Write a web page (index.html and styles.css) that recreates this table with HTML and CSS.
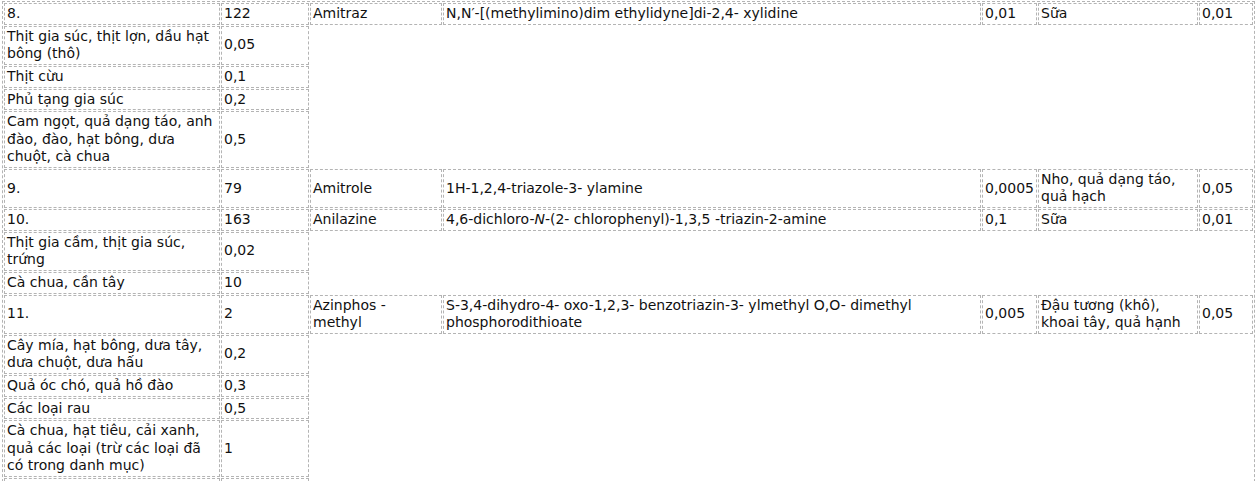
FILE: index.html
```html
<!DOCTYPE html>
<html lang="vi">
<head>
<meta charset="utf-8">
<title>Bảng giới hạn dư lượng</title>
<link rel="stylesheet" href="styles.css">
</head>
<body>
<table class="mrl">
  <tbody>
    <tr>
      <td class="c1">8.</td>
      <td class="c2">122</td>
      <td class="c3">Amitraz</td>
      <td class="c4">N,N′-[(methylimino)dim ethylidyne]di-2,4- xylidine</td>
      <td class="c5">0,01</td>
      <td class="c6">Sữa</td>
      <td class="c7">0,01</td>
    </tr>
    <tr><td>Thịt gia súc, thịt lợn, dầu hạt bông (thô)</td><td>0,05</td></tr>
    <tr><td>Thịt cừu</td><td>0,1</td></tr>
    <tr><td>Phủ tạng gia súc</td><td>0,2</td></tr>
    <tr><td>Cam ngọt, quả dạng táo, anh đào, đào, hạt bông, dưa chuột, cà chua</td><td>0,5</td></tr>
    <tr>
      <td>9.</td>
      <td>79</td>
      <td>Amitrole</td>
      <td>1H-1,2,4-triazole-3- ylamine</td>
      <td>0,0005</td>
      <td>Nho, quả dạng táo, quả hạch</td>
      <td>0,05</td>
    </tr>
    <tr>
      <td>10.</td>
      <td>163</td>
      <td>Anilazine</td>
      <td>4,6-dichloro-<i>N</i>-(2- chlorophenyl)-1,3,5 -triazin-2-amine</td>
      <td>0,1</td>
      <td>Sữa</td>
      <td>0,01</td>
    </tr>
    <tr><td>Thịt gia cầm, thịt gia súc, trứng</td><td>0,02</td></tr>
    <tr><td>Cà chua, cần tây</td><td>10</td></tr>
    <tr>
      <td>11.</td>
      <td>2</td>
      <td>Azinphos - methyl</td>
      <td>S-3,4-dihydro-4- oxo-1,2,3- benzotriazin-3- ylmethyl O,O- dimethyl phosphorodithioate</td>
      <td>0,005</td>
      <td>Đậu tương (khô), khoai tây, quả hạnh</td>
      <td>0,05</td>
    </tr>
    <tr><td>Cây mía, hạt bông, dưa tây, dưa chuột, dưa hấu</td><td>0,2</td></tr>
    <tr><td>Quả óc chó, quả hồ đào</td><td>0,3</td></tr>
    <tr><td>Các loại rau</td><td>0,5</td></tr>
    <tr><td>Cà chua, hạt tiêu, cải xanh, quả các loại (trừ các loại đã có trong danh mục)</td><td>1</td></tr>
    <tr class="next"><td>&nbsp;</td><td>&nbsp;</td></tr>
  </tbody>
</table>
</body>
</html>
```

FILE: styles.css
```css
html, body {
  margin: 0;
  padding: 0;
  background: #ffffff;
  overflow: hidden;
}

body {
  padding: 1px 0 0 2px;
  font-family: "DejaVu Sans", "Liberation Sans", sans-serif;
  font-size: 14px;
  color: #111111;
}

.mrl {
  width: 1253px;
  table-layout: fixed;
  border: 1px dashed #b4b4b4;
  border-spacing: 1px;
  border-collapse: separate;
}

.mrl td {
  box-sizing: border-box;
  border: 1px dashed #b4b4b4;
  padding: 1px 2px 1.5px;
  line-height: 17.3px;
  vertical-align: middle;
  text-align: left;
}

.mrl .c1 { width: 216px; }
.mrl .c2 { width: 88px; }
.mrl .c3 { width: 132px; }
.mrl .c4 { width: 538px; }
.mrl .c5 { width: 55px; }
.mrl .c6 { width: 160px; }
.mrl .c7 { width: 54px; }
```
